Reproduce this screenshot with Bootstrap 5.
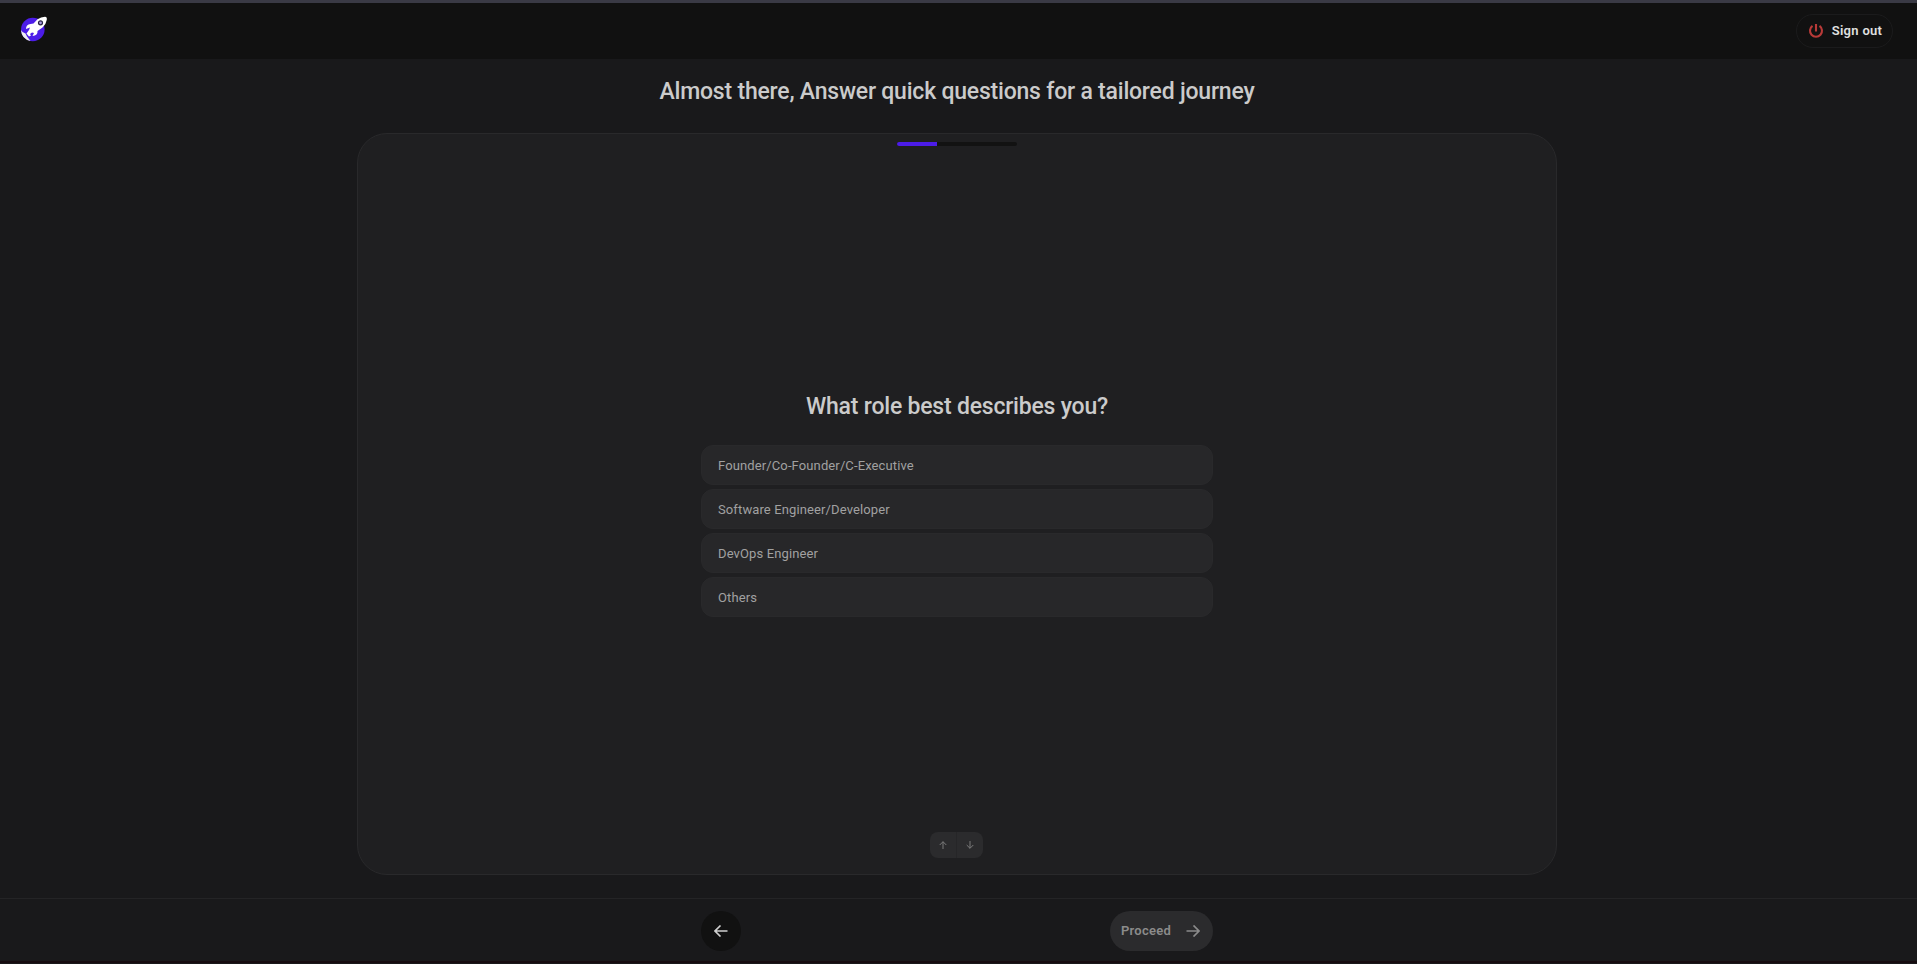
<!DOCTYPE html>
<html lang="en" data-bs-theme="dark">
<head>
<meta charset="utf-8">
<title>Onboarding</title>
<link href="https://cdn.jsdelivr.net/npm/bootstrap@5.3.0/dist/css/bootstrap.min.css" rel="stylesheet">
<style>
body{background:#19191b;color:#cfcfcf;font-family:Roboto,"Noto Sans",sans-serif;font-size:13px}
.topbar{height:59px;background:#111;border-top:3px solid #3a3a45;padding:0 24px 0 20px}
.brand-mark{margin-bottom:5px}
.signout{width:97px;height:34px;border:1px solid #1b1b1c;color:#e0e0e0;font-weight:600;font-size:13px;gap:7px;letter-spacing:.3px}
.signout span{padding-left:1px;margin-right:-1px}
.screen-title{font-size:23px;font-weight:500;line-height:32px;white-space:nowrap;color:#cbcbcb;letter-spacing:-.21px}
.main-title{margin:17px 0 25px -3px}
.panel{width:1200px;height:742px;background:#1f1f21;border:1px solid #29292b;border-radius:30px;padding:8px 0 16px;margin-left:-3px}
.steps{width:120px;height:4px;background:#121212;border-radius:2px}
.steps .progress-bar{background:#4c1ce8}
.question{padding-top:28px}
.question .screen-title{padding-top:2px;margin-bottom:22px}
.choices{width:512px;gap:4px}
.choice{height:40px;border-radius:12px;background:#272729;border:1px solid #29292b;color:#a1a1a1;font-size:13px;padding:2px 16px 0;text-align:left;letter-spacing:.12px}
.jump{width:53px;height:26px;border-radius:8px;background:#2b2b2d;color:#7b7b7b;overflow:hidden;margin-right:1px}
.jump span+span{border-left:1px solid #262628}
.footer-bar{margin-top:23px;height:63px;border-top:1px solid #242426;padding-top:12px}
.footer-row{width:512px;margin-left:-3px}
.back{width:40px;height:40px;background:#111;color:#d0d0d0}
.proceed{width:103px;height:40px;background:#2b2b2d;color:#8b8b8b;font-weight:600;font-size:13px;padding:0 12px 0 10px;letter-spacing:.25px}
.base-strip{height:2px;background:#160c10}
svg{display:block;flex:none}
</style>
</head>
<body class="vh-100 overflow-hidden d-flex flex-column">
<header class="topbar d-flex align-items-center justify-content-between">
<svg class="brand-mark" width="28" height="26" viewBox="0 0 28 26"><circle cx="12.800" cy="13.500" r="11.800" fill="#4c1ce8"/><path d="M1 14q1.500 3 4.500 3.500l1.500 3 3.500 4.500Q1.500 23 1 14Z" fill="#efefef"/><path d="M25 .8q2.200 0 1.800 3-.5 4-4.300 7.700L17.500 15q.5 4.500-5 5l1.500-3-2-.5-2 1.500 1 1.500-2 1-2.500-3 2.500-3.500 1-2.500-4 1.500q0-4.500 4.500-5l3-.5 4-4.200Q21 .8 25 .8Z" fill="#fff"/><circle cx="20.500" cy="6.800" r="2" fill="#a79be0" stroke="#292345" stroke-width="1.200"/></svg>
<button class="btn signout rounded-pill d-flex align-items-center justify-content-center p-0"><svg width="16" height="16" viewBox="0 0 16 16" fill="none" stroke="#b83a38" stroke-width="2.100"><path d="M8 1v7.500M4.500 2.900A6 6 0 1 0 11.500 2.900"/></svg><span>Sign out</span></button>
</header>
<main class="d-flex flex-column align-items-center">
<h1 class="screen-title main-title">Almost there, Answer quick questions for a tailored journey</h1>
<section class="panel d-flex flex-column align-items-center">
<div class="progress steps"><div class="progress-bar" style="width:33.33%"></div></div>
<div class="question flex-grow-1 d-flex flex-column align-items-center justify-content-center">
<h2 class="screen-title">What role best describes you?</h2>
<div class="choices d-grid">
<button class="btn choice">Founder/Co-Founder/C-Executive</button>
<button class="btn choice">Software Engineer/Developer</button>
<button class="btn choice">DevOps Engineer</button>
<button class="btn choice">Others</button>
</div>
</div>
<div class="jump d-flex"><span class="flex-fill d-flex align-items-center justify-content-center"><svg width="8" height="8" viewBox="0 0 8 8" fill="none" stroke="currentColor"><path d="M4 8V.7M.7 4 4 .7 7.300 4"/></svg></span><span class="flex-fill d-flex align-items-center justify-content-center"><svg width="8" height="8" viewBox="0 0 8 8" fill="none" stroke="currentColor"><path d="M4 0v7.300M.7 4 4 7.300 7.300 4"/></svg></span></div>
</section>
</main>
<footer class="footer-bar d-flex justify-content-center">
<div class="footer-row d-flex justify-content-between">
<button class="btn back rounded-circle p-0 d-flex align-items-center justify-content-center"><svg width="14" height="12" viewBox="0 0 14 12" fill="none" stroke="currentColor" stroke-width="1.600"><path d="M13.500 6H1M6.500.5 1 6l5.500 5.500"/></svg></button>
<button class="btn proceed rounded-pill d-flex align-items-center justify-content-between"><span>Proceed</span><svg width="14" height="12" viewBox="0 0 14 12" fill="none" stroke="currentColor" stroke-width="1.700"><path d="M.5 6H13M7.500.5 13 6l-5.500 5.500"/></svg></button>
</div>
</footer>
<div class="base-strip"></div>
<script src="https://cdn.jsdelivr.net/npm/bootstrap@5.3.0/dist/js/bootstrap.bundle.min.js"></script>
</body>
</html>
